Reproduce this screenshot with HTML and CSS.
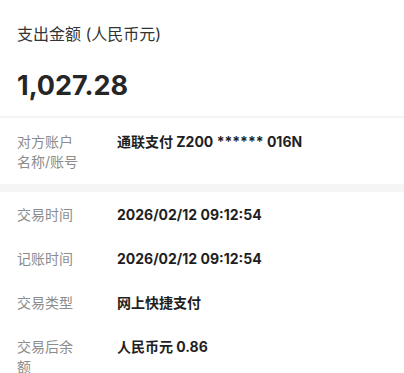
FILE: index.html
```html
<!DOCTYPE html>
<html lang="zh-CN">
<head>
    <meta charset="UTF-8">
    <meta name="viewport" content="width=device-width, initial-scale=1.0">
    <title>交易详情</title>
    <link rel="stylesheet" href="styles.css">
</head>
<body>
    <div class="summary">
        <div class="summary-title">支出金额 (人民币元)</div>
        <div class="summary-amount">1,027.28</div>
    </div>
    <div class="divider"></div>
    <div class="section section-first">
        <div class="row">
            <div class="label label-nowrap">对方账户<br>名称/账号</div>
            <div class="value">通联支付 Z200 ****** 016N</div>
        </div>
    </div>
    <div class="band"></div>
    <div class="section">
        <div class="row">
            <div class="label">交易时间</div>
            <div class="value">2026/02/12 09:12:54</div>
        </div>
        <div class="row">
            <div class="label">记账时间</div>
            <div class="value">2026/02/12 09:12:54</div>
        </div>
        <div class="row">
            <div class="label">交易类型</div>
            <div class="value">网上快捷支付</div>
        </div>
        <div class="row">
            <div class="label">交易后余额</div>
            <div class="value">人民币元 0.86</div>
        </div>
    </div>
</body>
</html>
```

FILE: styles.css
```css
body {
    font-family: "Inter", "Noto Sans CJK SC", sans-serif;
    margin: 0;
    padding: 0;
    background-color: #ffffff;
    color: #222222;
}
.summary {
    padding: 24px 17px 0;
    height: 92px;
}
.summary-title {
    font-size: 16px;
    line-height: 20px;
    color: #333333;
}
.summary-amount {
    margin-top: 26px;
    font-size: 27px;
    line-height: 32px;
    font-weight: 700;
    color: #262626;
}
.divider {
    height: 2px;
    background-color: #f4f4f4;
}
.section {
    padding: 0 17px;
}
.section-first .row {
    padding: 14px 0 12px;
}
.band {
    height: 8px;
    background-color: #f5f5f5;
}
.row {
    display: flex;
    padding: 13px 0 11px;
    font-size: 14px;
    line-height: 20px;
}
.label {
    width: 58px;
    flex-shrink: 0;
    color: #8c8c8c;
    margin-right: 42px;
}
.label-nowrap {
    white-space: nowrap;
}
.value {
    font-weight: 700;
    color: #1f1f1f;
}
```
